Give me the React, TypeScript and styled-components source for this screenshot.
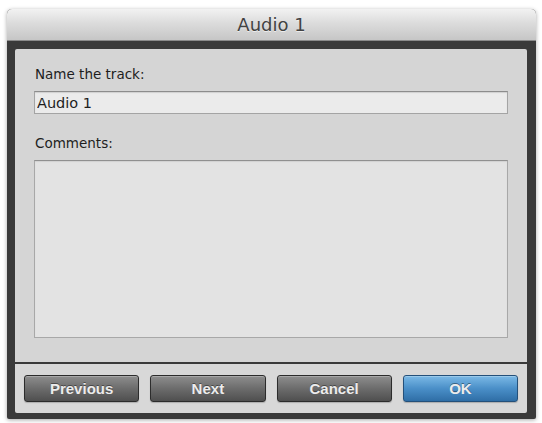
import { useState } from 'react'
import styled, { createGlobalStyle } from 'styled-components'

const GlobalStyle = createGlobalStyle`
  html, body {
    margin: 0;
    padding: 0;
    background: #ffffff;
  }
`

const buttons = [
  { label: 'Previous', primary: false },
  { label: 'Next', primary: false },
  { label: 'Cancel', primary: false },
  { label: 'OK', primary: true }
]

const App = () => {
  const [name, setName] = useState('Audio 1')
  const [comments, setComments] = useState('')

  return (
    <>
      <GlobalStyle />
      <Page>
        <Window>
          <TitleBar>Audio 1</TitleBar>
          <Frame>
            <ContentPanel>
              <Label>Name the track:</Label>
              <NameInput value={name} onChange={(e) => setName(e.target.value)} />
              <Label>Comments:</Label>
              <Comments value={comments} onChange={(e) => setComments(e.target.value)} />
            </ContentPanel>
            <Footer>
              {buttons.map((b) => (
                <Button key={b.label} $primary={b.primary}>
                  {b.label}
                </Button>
              ))}
            </Footer>
          </Frame>
        </Window>
      </Page>
    </>
  )
}

const Page = styled.div`
  padding: 9px 6px 4px 7px;
`

const Window = styled.div`
  width: 529px;
  height: 410px;
  display: flex;
  flex-direction: column;
  background: #3a3a3a;
  border-radius: 5px 5px 2px 2px;
  box-shadow: 0 1px 4px rgba(0, 0, 0, 0.35);
  overflow: hidden;
`

const TitleBar = styled.div`
  height: 31px;
  flex-shrink: 0;
  display: flex;
  align-items: center;
  justify-content: center;
  background: linear-gradient(to bottom, #f2f2f2 0%, #dcdcdc 45%, #c6c6c6 100%);
  border-bottom: 1px solid #8a8a8a;
  font-family: 'DejaVu Sans', 'Liberation Sans', sans-serif;
  font-size: 18px;
  color: #424242;
  text-shadow: 0 1px 0 rgba(255, 255, 255, 0.6);
`

const Frame = styled.div`
  flex: 1;
  display: flex;
  flex-direction: column;
  gap: 2px;
  padding: 8px 9px 6px 8px;
`

const ContentPanel = styled.div`
  height: 313px;
  display: flex;
  flex-direction: column;
  padding: 17px 19px 0 19px;
  box-sizing: border-box;
  background: #d5d5d5;
  border-radius: 2px 2px 0 0;
`

const Label = styled.div`
  font-family: 'DejaVu Sans', 'Liberation Sans', sans-serif;
  font-size: 13.5px;
  line-height: 16px;
  color: #1e1e1e;
  padding-left: 1px;
  margin-bottom: 9px;
`

const NameInput = styled.input`
  height: 23px;
  box-sizing: border-box;
  margin: 0 0 21px 0;
  padding: 0 2px;
  border: 1px solid #a4a4a4;
  border-top-color: #8c8c8c;
  background: #ebebeb;
  box-shadow: inset 0 1px 1px rgba(0, 0, 0, 0.12);
  font-family: 'DejaVu Sans', 'Liberation Sans', sans-serif;
  font-size: 14.5px;
  color: #1e1e1e;
  outline: none;
`

const Comments = styled.textarea`
  height: 178px;
  box-sizing: border-box;
  margin: 0;
  padding: 4px;
  resize: none;
  border: 1px solid #a8a8a8;
  border-top-color: #909090;
  background: #e3e3e3;
  box-shadow: inset 0 1px 1px rgba(0, 0, 0, 0.08);
  font-family: 'DejaVu Sans', 'Liberation Sans', sans-serif;
  font-size: 13px;
  outline: none;
`

const Footer = styled.div`
  height: 49px;
  box-sizing: border-box;
  display: grid;
  grid-template-columns: repeat(4, 1fr);
  gap: 11px;
  align-items: center;
  padding: 0 9px;
  background: #d8d8d8;
  border-radius: 0 0 2px 2px;
`

const Button = styled.button<{ $primary: boolean }>`
  height: 27px;
  border-radius: 3px;
  border: 1px solid ${(p) => (p.$primary ? '#24507a' : '#2c2c2c')};
  background: ${(p) =>
    p.$primary
      ? 'linear-gradient(to bottom, #7bb9e6 0%, #4a8fc8 50%, #2f6ea6 100%)'
      : 'linear-gradient(to bottom, #8e8e8e 0%, #6c6c6c 50%, #4f4f4f 100%)'};
  box-shadow: inset 0 1px 0 rgba(255, 255, 255, 0.25), 0 1px 1px rgba(0, 0, 0, 0.2);
  font-family: 'Liberation Sans', Arial, sans-serif;
  font-weight: bold;
  font-size: 15px;
  color: #ececec;
  text-shadow: 0 -1px 0 rgba(0, 0, 0, 0.4);
  cursor: pointer;
  padding: 0;
`

export default App
